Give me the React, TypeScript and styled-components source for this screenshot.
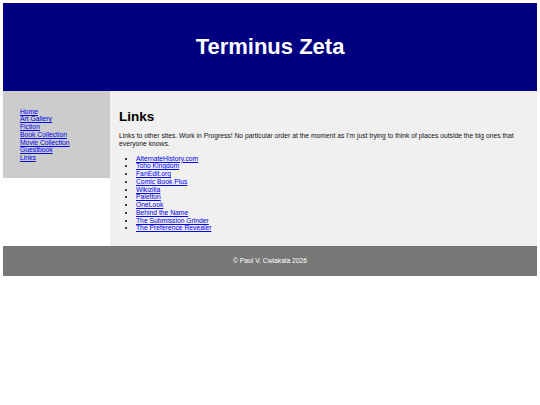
import styled, { createGlobalStyle } from 'styled-components';

const GlobalStyle = createGlobalStyle`
  body {
    margin: 3px;
    font-family: "Liberation Sans", Arial, sans-serif;
    font-size: 6.75px;
    line-height: 7.75px;
    background: #ffffff;
  }
  a {
    color: #0000ee;
  }
`

const Header = styled.header`
  background: #000080;
  height: 88px;
  display: flex;
  align-items: center;
  justify-content: center;`

const Title = styled.h1`
  margin: 0;
  color: #ffffff;
  font-size: 22px;
  line-height: normal;
  font-weight: bold;`

const Body = styled.div`
  display: flex;
  align-items: stretch;`

const Sidebar = styled.nav`
  width: 107px;
  flex: none;
  align-self: flex-start;
  background: #cccccc;
  padding: 16.5px 0 16px 17px;
  box-sizing: border-box;`

const NavList = styled.ul`
  list-style: none;
  margin: 0;
  padding: 0;`

const Main = styled.main`
  flex: 1;
  background: #f0f0f0;
  padding: 17.5px 9px 14px 9px;`

const Heading = styled.h2`
  font-size: 13.5px;
  line-height: 15.5px;
  margin: 0 0 8px 0;`

const Intro = styled.p`
  margin: 0 0 7px 0;
  color: #111111;`

const LinkList = styled.ul`
  margin: 0;
  padding-left: 17px;`

const Footer = styled.footer`
  background: #777777;
  height: 30px;
  display: flex;
  align-items: center;
  justify-content: center;
  color: #ffffff;`

const navItems = ['Home', 'Art Gallery', 'Fiction', 'Book Collection', 'Movie Collection', 'Guestbook', 'Links'];

const links = [
  'AlternateHistory.com',
  'Toho Kingdom',
  'FanEdit.org',
  'Comic Book Plus',
  'Wikizilla',
  'Paletton',
  'OneLook',
  'Behind the Name',
  'The Submission Grinder',
  'The Preference Revealer',
];

export default function App() {
  return (
    <>
      <GlobalStyle />
      <Header>
        <Title>Terminus Zeta</Title>
      </Header>
      <Body>
        <Sidebar>
          <NavList>
            {navItems.map(item => <li key={item}><a href="#">{item}</a></li>)}
          </NavList>
        </Sidebar>
        <Main>
          <Heading>Links</Heading>
          <Intro>
            Links to other sites. Work in Progress! No particular order at the moment as I'm just trying to think of places outside the big ones that everyone knows.
          </Intro>
          <LinkList>
            {links.map(link => <li key={link}><a href="#">{link}</a></li>)}
          </LinkList>
        </Main>
      </Body>
      <Footer>© Paul V. Cwiakala 2026</Footer>
    </>
  )
}
